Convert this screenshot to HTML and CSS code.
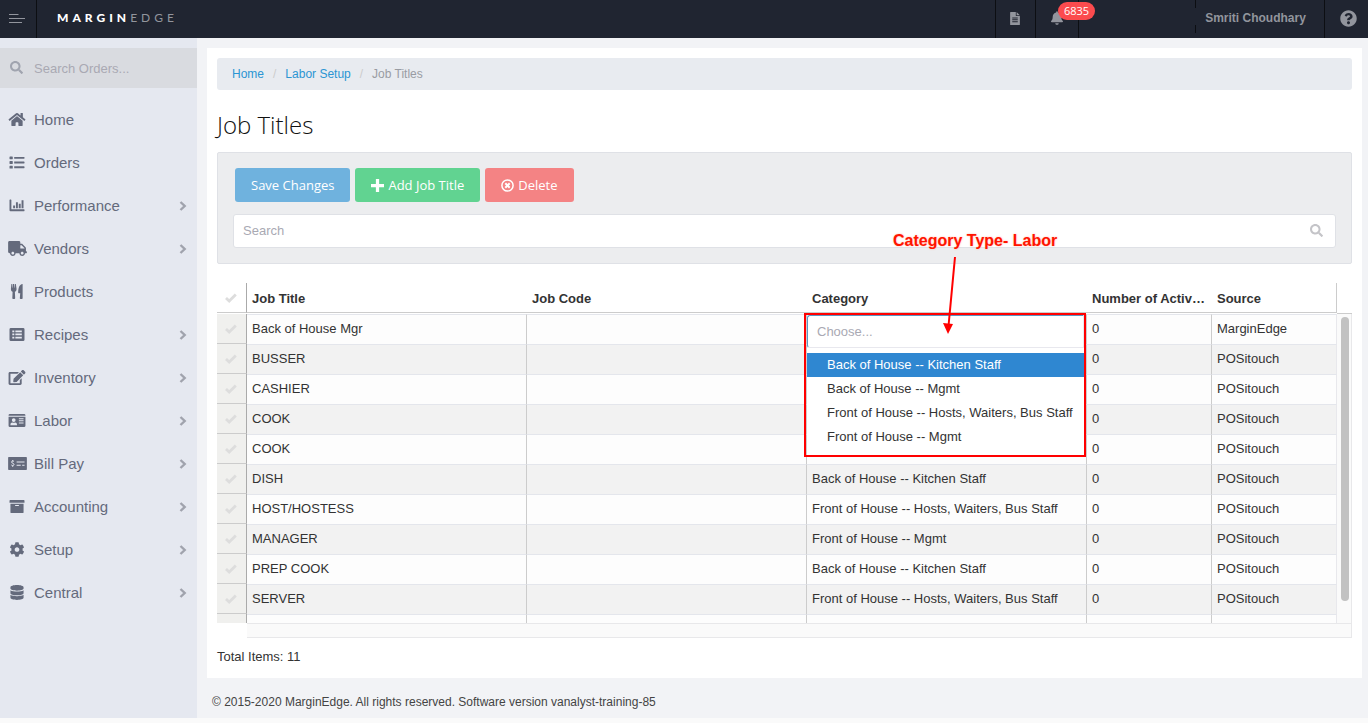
FILE: index.html
```html
<!DOCTYPE html>
<html lang="en">
<head>
  <meta charset="UTF-8">
  <meta name="viewport" content="width=device-width, initial-scale=1.0">
  <title>Job Titles - MarginEdge</title>
  <link rel="stylesheet" href="styles.css">
</head>
<body>

  <!-- Icon set -->
  <svg class="icon-set" aria-hidden="true">
    <symbol id="i-search" viewBox="0 0 512 512"><path d="M505 442.7L405.3 343c-4.5-4.5-10.6-7-17-7H372c27.6-35.3 44-79.7 44-128C416 93.1 322.9 0 208 0S0 93.1 0 208s93.1 208 208 208c48.3 0 92.7-16.4 128-44v16.3c0 6.4 2.5 12.5 7 17l99.7 99.7c9.4 9.4 24.6 9.4 33.9 0l28.3-28.3c9.4-9.4 9.4-24.6.1-34zM208 336c-70.7 0-128-57.2-128-128 0-70.7 57.2-128 128-128 70.7 0 128 57.2 128 128 0 70.7-57.2 128-128 128z"/></symbol>
    <symbol id="i-home" viewBox="0 0 576 512"><path d="M280.37 148.26L96 300.11V464a16 16 0 0 0 16 16l112.06-.29a16 16 0 0 0 15.92-16V368a16 16 0 0 1 16-16h64a16 16 0 0 1 16 16v95.64a16 16 0 0 0 16 16.05L464 480a16 16 0 0 0 16-16V300L295.67 148.26a12.19 12.19 0 0 0-15.3 0zM571.6 251.47L488 182.56V44.05a12 12 0 0 0-12-12h-56a12 12 0 0 0-12 12v72.61L318.47 43a48 48 0 0 0-61 0L4.34 251.47a12 12 0 0 0-1.6 16.9l25.5 31A12 12 0 0 0 45.15 301l235.22-193.74a12.19 12.19 0 0 1 15.3 0L530.9 301a12 12 0 0 0 16.9-1.6l25.5-31a12 12 0 0 0-1.7-16.93z"/></symbol>
    <symbol id="i-list" viewBox="0 0 512 512"><path d="M16 48h80a16 16 0 0 1 16 16v64a16 16 0 0 1-16 16H16a16 16 0 0 1-16-16V64a16 16 0 0 1 16-16zm0 160h80a16 16 0 0 1 16 16v64a16 16 0 0 1-16 16H16a16 16 0 0 1-16-16v-64a16 16 0 0 1 16-16zm0 160h80a16 16 0 0 1 16 16v64a16 16 0 0 1-16 16H16a16 16 0 0 1-16-16v-64a16 16 0 0 1 16-16zM160 64h336a16 16 0 0 1 16 16v32a16 16 0 0 1-16 16H160zm0 160h336a16 16 0 0 1 16 16v32a16 16 0 0 1-16 16H160zm0 160h336a16 16 0 0 1 16 16v32a16 16 0 0 1-16 16H160z"/></symbol>
    <symbol id="i-chart" viewBox="0 0 512 512"><path d="M16 48h32a16 16 0 0 1 16 16v320h432a16 16 0 0 1 16 16v32a16 16 0 0 1-16 16H32a32 32 0 0 1-32-32V64a16 16 0 0 1 16-16zM124 256h66v96h-66zM220 144h66v208h-66zM316 192h66v160h-66zM412 80h66v272h-66z"/></symbol>
    <symbol id="i-truck" viewBox="0 0 640 512"><path d="M624 352h-16V243.9c0-12.7-5.1-24.9-14.1-33.9L494 110.1c-9-9-21.2-14.1-33.9-14.1H416V48c0-26.5-21.5-48-48-48H48C21.5 0 0 21.5 0 48v320c0 26.5 21.5 48 48 48h16c0 53 43 96 96 96s96-43 96-96h128c0 53 43 96 96 96s96-43 96-96h48c8.8 0 16-7.2 16-16v-32c0-8.8-7.2-16-16-16zM160 464c-26.5 0-48-21.5-48-48s21.5-48 48-48 48 21.5 48 48-21.5 48-48 48zm320 0c-26.5 0-48-21.5-48-48s21.5-48 48-48 48 21.5 48 48-21.5 48-48 48zm80-208H416V144h44.1l99.9 99.9V256z"/></symbol>
    <symbol id="i-utensils" viewBox="0 0 416 512"><path d="M16 0h32l6 130h10L72 0h40l8 130h10L138 0h30l24 160c4 60-22 92-56 106l10 220c0 16-12 26-26 26H74c-14 0-26-10-26-26l10-220C24 250-4 220 0 160zM400 16v472c0 14-10 24-24 24h-48c-14 0-24-10-24-24l14-174h-52c-12 0-20-8-18-20C252 160 270 30 384 0c10 0 16 6 16 16z"/></symbol>
    <symbol id="i-recipes" viewBox="0 0 512 512"><path fill-rule="evenodd" d="M48 32h416a48 48 0 0 1 48 48v352a48 48 0 0 1-48 48H48a48 48 0 0 1-48-48V80a48 48 0 0 1 48-48zM96 116v60h68v-60zM200 116v60h220v-60zM96 224v60h68v-60zM200 224v60h220v-60zM96 332v60h68v-60zM200 332v60h220v-60z"/></symbol>
    <symbol id="i-edit" viewBox="0 0 576 512"><path d="M402.6 83.2l90.2 90.2c3.8 3.8 3.8 10 0 13.8L274.4 405.6l-92.8 10.3c-12.4 1.4-22.9-9.1-21.5-21.5l10.3-92.8L388.8 83.2c3.8-3.8 10-3.8 13.8 0zm162-22.9l-48.8-48.8c-15.2-15.2-39.9-15.2-55.2 0l-35.4 35.4c-3.8 3.8-3.8 10 0 13.8l90.2 90.2c3.8 3.8 10 3.8 13.8 0l35.4-35.4c15.2-15.3 15.2-40 0-55.2zM384 346.2V448H64V128h229.8c3.2 0 6.2-1.3 8.5-3.5l40-40c7.6-7.6 2.2-20.5-8.5-20.5H48C21.5 64 0 85.5 0 112v352c0 26.5 21.5 48 48 48h352c26.5 0 48-21.5 48-48V306.2c0-10.7-12.9-16-20.5-8.5l-40 40c-2.2 2.3-3.5 5.3-3.5 8.5z"/></symbol>
    <symbol id="i-idcard" viewBox="0 0 576 512"><path fill-rule="evenodd" d="M48 32h480a48 48 0 0 1 48 48v16H0V80a48 48 0 0 1 48-48zM0 128h576v304a48 48 0 0 1-48 48H48a48 48 0 0 1-48-48zM176 176a64 64 0 1 0 0 128a64 64 0 1 0 0-128zM64 400v16h224v-16c0-44-30-72-64-72-30 12-66 12-96 0-34 0-64 28-64 72zM352 176v36h160v-36zM352 248v36h160v-36zM352 320v36h160v-36z"/></symbol>
    <symbol id="i-check-pay" viewBox="0 0 640 512"><path d="M24 32h592a24 24 0 0 1 24 24v400a24 24 0 0 1-24 24H24a24 24 0 0 1-24-24V56a24 24 0 0 1 24-24z"/><path d="M200 190c-10-20-80-30-84 14-2 50 86 34 84 88-4 46-80 38-92 10M156 140v36M156 330v40" fill="none" stroke="#e5e8f0" stroke-width="34"/><path d="M290 190h270v34H290zM290 300h140v34H290zM480 300h80v34h-80z" fill="#e5e8f0"/></symbol>
    <symbol id="i-archive" viewBox="0 0 512 512"><path fill-rule="evenodd" d="M24 32h464a24 24 0 0 1 24 24v72H0V56a24 24 0 0 1 24-24zM32 160h448v288a32 32 0 0 1-32 32H64a32 32 0 0 1-32-32zM192 204v36h128v-36z"/></symbol>
    <symbol id="i-cog" viewBox="0 0 512 512"><path d="M487.4 315.7l-42.6-24.6c4.3-23.2 4.3-47 0-70.2l42.6-24.6c4.9-2.8 7.1-8.6 5.5-14-11.1-35.6-30-67.8-54.7-94.6-3.8-4.1-10-5.1-14.8-2.3L380.8 110c-17.9-15.4-38.5-27.3-60.8-35.1V25.8c0-5.6-3.9-10.5-9.4-11.7-36.7-8.2-74.3-7.8-109.2 0-5.5 1.2-9.4 6.1-9.4 11.7V75c-22.2 7.9-42.8 19.8-60.8 35.1L88.7 85.5c-4.9-2.8-11-1.9-14.8 2.3-24.7 26.7-43.6 58.9-54.7 94.6-1.7 5.4.6 11.2 5.5 14L67.3 221c-4.3 23.2-4.3 47 0 70.2l-42.6 24.6c-4.9 2.8-7.1 8.6-5.5 14 11.1 35.6 30 67.8 54.7 94.6 3.8 4.1 10 5.1 14.8 2.3l42.6-24.6c17.9 15.4 38.5 27.3 60.8 35.1v49.2c0 5.6 3.9 10.5 9.4 11.7 36.7 8.2 74.3 7.8 109.2 0 5.5-1.2 9.4-6.1 9.4-11.7v-49.2c22.2-7.9 42.8-19.8 60.8-35.1l42.6 24.6c4.9 2.8 11 1.9 14.8-2.3 24.7-26.7 43.6-58.9 54.7-94.6 1.5-5.5-.7-11.3-5.6-14.1zM256 336c-44.1 0-80-35.9-80-80s35.9-80 80-80 80 35.9 80 80-35.9 80-80 80z"/></symbol>
    <symbol id="i-database" viewBox="0 0 448 512"><path d="M448 73.143v45.714C448 159.143 347.667 192 224 192S0 159.143 0 118.857V73.143C0 32.857 100.333 0 224 0s224 32.857 224 73.143zM448 176v102.857C448 319.143 347.667 352 224 352S0 319.143 0 278.857V176c48.125 33.143 136.208 48.572 224 48.572S399.874 209.143 448 176zm0 160v102.857C448 479.143 347.667 512 224 512S0 479.143 0 438.857V336c48.125 33.143 136.208 48.572 224 48.572S399.874 369.143 448 336z"/></symbol>
    <symbol id="i-chevron" viewBox="0 0 8 10"><path d="M1.500 1l4.200 4-4.200 4" fill="none" stroke="currentColor" stroke-width="2.400"/></symbol>
    <symbol id="i-file" viewBox="0 0 384 512"><path fill-rule="evenodd" d="M24 0h200v136a24 24 0 0 0 24 24h136v328a24 24 0 0 1-24 24H24a24 24 0 0 1-24-24V24A24 24 0 0 1 24 0zM256 0l128 128H256zM84 216v40h216v-40zM84 288v40h216v-40zM84 360v40h216v-40z"/></symbol>
    <symbol id="i-bell" viewBox="0 0 448 512"><path d="M224 512c35.32 0 63.97-28.65 63.97-64H160.03c0 35.35 28.65 64 63.97 64zm215.39-149.71c-19.32-20.76-55.47-51.99-55.47-154.29 0-77.7-54.48-139.9-127.94-155.16V32c0-17.67-14.32-32-31.98-32s-31.98 14.33-31.98 32v20.84C118.56 68.1 64.08 130.3 64.08 208c0 102.3-36.15 133.53-55.47 154.29-6 6.45-8.66 14.16-8.61 21.71.11 16.4 12.98 32 32.1 32h383.8c19.12 0 32-15.6 32.1-32 .05-7.55-2.61-15.27-8.61-21.71z"/></symbol>
    <symbol id="i-question" viewBox="0 0 512 512"><path d="M504 256c0 136.997-111.043 248-248 248S8 392.997 8 256C8 119.083 119.043 8 256 8s248 111.083 248 248zM262.655 90c-54.497 0-89.255 22.957-116.549 63.758-3.536 5.286-2.353 12.415 2.715 16.258l34.699 26.31c5.205 3.947 12.621 3.008 16.665-2.122 17.864-22.658 30.113-35.797 57.303-35.797 20.429 0 45.698 13.148 45.698 32.958 0 14.976-12.363 22.667-32.534 33.976C247.128 238.528 216 254.941 216 296v4c0 6.627 5.373 12 12 12h56c6.627 0 12-5.373 12-12v-1.333c0-28.462 83.186-29.647 83.186-106.667 0-58.002-60.165-102-116.531-102zM256 338c-25.365 0-46 20.635-46 46 0 25.364 20.635 46 46 46s46-20.636 46-46c0-25.365-20.635-46-46-46z"/></symbol>
    <symbol id="i-plus" viewBox="0 0 12 12"><path d="M4.5 0h3v4.5H12v3H7.5V12h-3V7.500H0v-3h4.500z"/></symbol>
    <symbol id="i-remove" viewBox="0 0 13 13"><circle cx="6.500" cy="6.500" r="5.600" fill="none" stroke="currentColor" stroke-width="1.500"/><path d="M4.300 4.300l4.400 4.400M8.700 4.300L4.300 8.700" stroke="currentColor" stroke-width="2"/></symbol>
    <symbol id="i-ok" viewBox="0 0 12 10"><path d="M1 5l3.200 3L10.800 1.500" fill="none" stroke="currentColor" stroke-width="2.800"/></symbol>
  </svg>

  <header class="topbar">
    <button class="menu-toggle" aria-label="Menu">
      <svg width="16" height="10" viewBox="0 0 16 10"><path d="M0 .5h9.500M0 4.500h16M0 8.500h13" stroke="currentColor"/></svg>
    </button>
    <a class="logo" href="#"><b>MARGIN</b>EDGE</a>
    <a class="top-item top-file" href="#" aria-label="Documents"><svg class="icon-file"><use href="#i-file"/></svg></a>
    <a class="top-item top-bell" href="#" aria-label="Notifications"><svg class="icon-bell"><use href="#i-bell"/></svg><span class="badge">6835</span></a>
    <div class="top-item top-tenant"></div>
    <a class="top-item top-user" href="#">Smriti Choudhary</a>
    <a class="top-item top-help" href="#" aria-label="Help"><svg class="icon-help"><use href="#i-question"/></svg></a>
  </header>

  <div class="layout">
    <aside class="sidebar">
      <label class="side-search">
        <svg><use href="#i-search"/></svg>
        <input type="text" placeholder="Search Orders..." aria-label="Search Orders">
      </label>
      <nav class="side-nav">
        <a href="#"><svg class="nav-icon"><use href="#i-home"/></svg><span>Home</span></a>
        <a href="#"><svg class="nav-icon"><use href="#i-list"/></svg><span>Orders</span></a>
        <a href="#"><svg class="nav-icon"><use href="#i-chart"/></svg><span>Performance</span><svg class="chevron"><use href="#i-chevron"/></svg></a>
        <a href="#"><svg class="nav-icon wide"><use href="#i-truck"/></svg><span>Vendors</span><svg class="chevron"><use href="#i-chevron"/></svg></a>
        <a href="#"><svg class="nav-icon"><use href="#i-utensils"/></svg><span>Products</span></a>
        <a href="#"><svg class="nav-icon"><use href="#i-recipes"/></svg><span>Recipes</span><svg class="chevron"><use href="#i-chevron"/></svg></a>
        <a href="#"><svg class="nav-icon"><use href="#i-edit"/></svg><span>Inventory</span><svg class="chevron"><use href="#i-chevron"/></svg></a>
        <a href="#"><svg class="nav-icon"><use href="#i-idcard"/></svg><span>Labor</span><svg class="chevron"><use href="#i-chevron"/></svg></a>
        <a href="#"><svg class="nav-icon wide"><use href="#i-check-pay"/></svg><span>Bill Pay</span><svg class="chevron"><use href="#i-chevron"/></svg></a>
        <a href="#"><svg class="nav-icon"><use href="#i-archive"/></svg><span>Accounting</span><svg class="chevron"><use href="#i-chevron"/></svg></a>
        <a href="#"><svg class="nav-icon"><use href="#i-cog"/></svg><span>Setup</span><svg class="chevron"><use href="#i-chevron"/></svg></a>
        <a href="#"><svg class="nav-icon"><use href="#i-database"/></svg><span>Central</span><svg class="chevron"><use href="#i-chevron"/></svg></a>
      </nav>
    </aside>

    <div class="content">
      <main class="card">
        <nav class="breadcrumb">
          <a href="#">Home</a><i>/</i><a href="#">Labor Setup</a><i>/</i><span>Job Titles</span>
        </nav>

        <h1>Job Titles</h1>

        <div class="panel">
          <div class="buttons">
            <button class="button save">Save Changes</button>
            <button class="button add"><svg><use href="#i-plus"/></svg>Add Job Title</button>
            <button class="button delete"><svg><use href="#i-remove"/></svg>Delete</button>
          </div>
          <label class="search-box">
            <input type="text" placeholder="Search" aria-label="Search">
            <svg><use href="#i-search"/></svg>
          </label>
        </div>

        <div class="grid">
          <div class="grid-main">
            <div class="grid-viewport">
              <table>
                <colgroup>
                  <col class="col-check"><col class="col-wide"><col class="col-wide"><col class="col-wide"><col class="col-count"><col>
                </colgroup>
                <thead>
                  <tr>
                    <th class="check"><label><input type="checkbox" aria-label="Select all"><svg><use href="#i-ok"/></svg></label></th>
                    <th>Job Title</th><th>Job Code</th><th>Category</th><th>Number of Active Employees</th><th>Source</th>
                  </tr>
                </thead>
                <tbody>
                  <tr>
                    <td class="check"><label><input type="checkbox" aria-label="Select row"><svg><use href="#i-ok"/></svg></label></td>
                    <td>Back of House Mgr</td><td></td>
                    <td class="editing">
                      <div class="chooser">
                        <input type="text" placeholder="Choose..." aria-label="Category">
                        <ul role="listbox">
                          <li class="active" role="option">Back of House -- Kitchen Staff</li>
                          <li role="option">Back of House -- Mgmt</li>
                          <li role="option">Front of House -- Hosts, Waiters, Bus Staff</li>
                          <li role="option">Front of House -- Mgmt</li>
                        </ul>
                      </div>
                    </td>
                    <td>0</td><td>MarginEdge</td>
                  </tr>
                  <tr><td class="check"><label><input type="checkbox" aria-label="Select row"><svg><use href="#i-ok"/></svg></label></td><td>BUSSER</td><td></td><td></td><td>0</td><td>POSitouch</td></tr>
                  <tr><td class="check"><label><input type="checkbox" aria-label="Select row"><svg><use href="#i-ok"/></svg></label></td><td>CASHIER</td><td></td><td></td><td>0</td><td>POSitouch</td></tr>
                  <tr><td class="check"><label><input type="checkbox" aria-label="Select row"><svg><use href="#i-ok"/></svg></label></td><td>COOK</td><td></td><td></td><td>0</td><td>POSitouch</td></tr>
                  <tr><td class="check"><label><input type="checkbox" aria-label="Select row"><svg><use href="#i-ok"/></svg></label></td><td>COOK</td><td></td><td></td><td>0</td><td>POSitouch</td></tr>
                  <tr><td class="check"><label><input type="checkbox" aria-label="Select row"><svg><use href="#i-ok"/></svg></label></td><td>DISH</td><td></td><td>Back of House -- Kitchen Staff</td><td>0</td><td>POSitouch</td></tr>
                  <tr><td class="check"><label><input type="checkbox" aria-label="Select row"><svg><use href="#i-ok"/></svg></label></td><td>HOST/HOSTESS</td><td></td><td>Front of House -- Hosts, Waiters, Bus Staff</td><td>0</td><td>POSitouch</td></tr>
                  <tr><td class="check"><label><input type="checkbox" aria-label="Select row"><svg><use href="#i-ok"/></svg></label></td><td>MANAGER</td><td></td><td>Front of House -- Mgmt</td><td>0</td><td>POSitouch</td></tr>
                  <tr><td class="check"><label><input type="checkbox" aria-label="Select row"><svg><use href="#i-ok"/></svg></label></td><td>PREP COOK</td><td></td><td>Back of House -- Kitchen Staff</td><td>0</td><td>POSitouch</td></tr>
                  <tr><td class="check"><label><input type="checkbox" aria-label="Select row"><svg><use href="#i-ok"/></svg></label></td><td>SERVER</td><td></td><td>Front of House -- Hosts, Waiters, Bus Staff</td><td>0</td><td>POSitouch</td></tr>
                  <tr><td class="check"></td><td></td><td></td><td></td><td></td><td></td></tr>
                </tbody>
              </table>
            </div>

            <!-- Callout for the category editor -->
            <div class="callout">
              <div class="callout-text">Category Type- Labor</div>
              <svg class="callout-arrow" width="16" height="80" viewBox="0 0 16 80"><path d="M12 1L5.500 70" stroke="#f00" stroke-width="2"/><path d="M0 67l10 1-5 10z" fill="#f00"/></svg>
            </div>
          </div>
          <div class="grid-scroll"><div class="thumb"></div></div>
        </div>
        <div class="grid-foot"></div>
        <div class="total">Total Items: 11</div>
      </main>
      <footer class="footer">© 2015-2020 MarginEdge. All rights reserved. Software version vanalyst-training-85</footer>
    </div>
  </div>

</body>
</html>
```

FILE: styles.css
```css
* {
  box-sizing: border-box;
}

body {
  margin: 0;
  min-height: 100vh;
  background: #fafafa;
  color: #333;
  font-family: "Liberation Sans", Arial, sans-serif;
  font-size: 13px;
  line-height: 18px;
}

a {
  color: inherit;
  text-decoration: none;
}

svg {
  fill: currentColor;
  flex: none;
}

input {
  font: inherit;
  color: inherit;
}

input::placeholder {
  color: #a9a9b3;
  opacity: 1;
}

.icon-set {
  display: none;
}

/* Top bar */
.topbar {
  display: flex;
  height: 38px;
  background: #202531;
  color: #92959d;
}

.menu-toggle {
  width: 37px;
  padding: 0 0 0 9px;
  border: none;
  border-right: 1px solid #0c0e12;
  background: none;
  color: #92959d;
  text-align: left;
}

.logo {
  flex: 1;
  padding-left: 20px;
  font-family: Lato, sans-serif;
  font-size: 12px;
  line-height: 36px;
  letter-spacing: 4px;
}

.logo b {
  color: #fff;
  font-weight: 900;
}

.top-item {
  display: flex;
  align-items: center;
  justify-content: center;
  border-left: 1px solid #0c0e12;
}

.top-file {
  width: 40px;
  padding: 0 2px 2px 0;
}

.top-bell {
  position: relative;
  width: 43px;
  padding-bottom: 2px;
}

.top-tenant {
  width: 117px;
}

.top-user {
  width: 129px;
  padding: 0 8px 2px 0;
  border-left: none;
  background: linear-gradient(#0c0e12 0 8px, transparent 8px 25px, #0c0e12 25px 33px, transparent 33px) no-repeat 0 0 / 1px 33px;
  font-size: 12px;
  font-weight: bold;
}

.top-help {
  width: 44px;
  padding: 0 0 2px 4px;
}

.icon-file {
  width: 10px;
  height: 13px;
}

.icon-bell {
  width: 12px;
  height: 14px;
}

.icon-help {
  width: 17px;
  height: 17px;
}

.badge {
  position: absolute;
  top: 2px;
  left: 22px;
  padding: 0 6px;
  border-radius: 9px;
  background: #fb4b4e;
  color: #fff;
  font-family: "Open Sans", sans-serif;
  font-size: 11px;
  line-height: 18px;
}

/* Sidebar */
.layout {
  display: flex;
}

.sidebar {
  flex: none;
  width: 197px;
  padding-top: 10px;
  background: #e5e8f0;
  color: #646a7c;
}

.side-search {
  display: flex;
  align-items: center;
  gap: 11px;
  height: 40px;
  padding-left: 10px;
  background: #d9dbe0;
  color: #a0a4af;
}

.side-search svg {
  width: 13px;
  height: 13px;
  margin-bottom: 2px;
}

.side-search input {
  width: 150px;
  padding: 2px 0 0;
  border: none;
  background: none;
}

.side-nav {
  padding-top: 10px;
}

.side-nav a {
  display: flex;
  align-items: center;
  gap: 8px;
  height: 43px;
  padding: 0 10px 0 8px;
  font-size: 15px;
}

.side-nav span {
  flex: 1;
}

.nav-icon {
  width: 18px;
  height: 15px;
}

.nav-icon.wide {
  width: 19px;
  margin-right: -1px;
}

.chevron {
  width: 8px;
  height: 10px;
  color: #a0a3ad;
}

/* Content */
.content {
  flex: 1;
  min-width: 0;
  background: #f2f3f6;
}

.card {
  margin: 10px 6px 0 10px;
  padding: 10px;
  background: #fff;
}

.breadcrumb {
  height: 32px;
  padding-left: 15px;
  border-radius: 3px;
  background: #e8ebf0;
  color: #999ca3;
  font-size: 12px;
  line-height: 32px;
}

.breadcrumb a {
  color: #2b95d3;
}

.breadcrumb i {
  padding: 0 9px;
  color: #ccc;
  font-style: normal;
}

h1 {
  margin: 18px 0 11px;
  color: #111;
  font-family: "Open Sans", sans-serif;
  font-size: 24px;
  font-weight: 300;
  line-height: 33px;
}

.panel {
  padding: 15px;
  border: 1px solid #dfe1e6;
  border-radius: 2px;
  background: #ecedef;
}

.buttons {
  display: flex;
  gap: 5px;
  margin-bottom: 12px;
  padding-left: 2px;
}

.button {
  display: flex;
  align-items: center;
  gap: 4px;
  height: 34px;
  padding: 0 16px;
  border: none;
  border-radius: 3px;
  color: #fff;
  font-family: "Open Sans", sans-serif;
  font-size: 13px;
  cursor: pointer;
}

.button svg {
  width: 13px;
  height: 13px;
}

.save {
  background: #6fb2de;
}

.add {
  background: #61d391;
}

.delete {
  background: #f48384;
}

.search-box {
  display: flex;
  align-items: center;
  height: 34px;
  padding: 0 12px 0 9px;
  border: 1px solid #dfe1e6;
  border-radius: 3px;
  background: #fff;
  color: #c4c4c8;
}

.search-box input {
  flex: 1;
  padding: 0;
  border: none;
  background: none;
}

.search-box svg {
  width: 13px;
  height: 13px;
  margin-bottom: 2px;
}

/* Grid */
.grid {
  display: flex;
  margin-top: 19px;
}

.grid-main {
  flex: 1;
  position: relative;
  min-width: 0;
}

.grid-viewport {
  height: 340px;
  overflow: hidden;
}

table {
  width: 100%;
  table-layout: fixed;
  border-spacing: 0;
}

.col-check {
  width: 30px;
}

.col-wide {
  width: 25%;
}

.col-count {
  width: 125px;
}

th,
td {
  height: 30px;
  padding: 0 5px 2px;
  overflow: hidden;
  text-align: left;
  text-overflow: ellipsis;
  white-space: nowrap;
}

th {
  padding: 2px 5px 0;
  border-bottom: 1px solid #ccc;
  color: #333;
}

th:last-child {
  border-right: 1px solid #ccc;
}

/* thin gap under the header line */
tbody::before {
  content: "";
  display: block;
  height: 1px;
}

td {
  border-top: 1px solid #e4e6ec;
  border-right: 1px solid #ccc;
  background: #fdfdfd;
}

tr:nth-child(even) td {
  background: #f2f2f2;
}

td:last-child {
  border-right-color: #e8e8ec;
}

.check,
tr:nth-child(even) .check {
  padding: 0 2px 0 0;
  border-right: 1px solid #aaa;
}

td.check,
tr:nth-child(even) td.check {
  border-top: none;
  border-bottom: 1px solid #ccc;
  background: #f0f0ee;
}

.check label {
  display: flex;
  justify-content: center;
}

.check input {
  position: absolute;
  opacity: 0;
}

.check svg {
  width: 12px;
  height: 10px;
  color: #ddd;
}

.check input:checked + svg {
  color: #2f87d1;
}

/* Category editor */
.editing {
  position: relative;
  overflow: visible;
}

.chooser {
  position: absolute;
  z-index: 1;
  top: 0;
  left: 0;
  right: 2px;
}

.chooser input {
  display: block;
  width: 100%;
  height: 33px;
  padding: 0 9px;
  border: 1px solid #e8e8ee;
  border-top-color: #5897c4;
  border-left-color: #5897c4;
  border-radius: 3px 0 0 3px;
  background: #fff;
}

.chooser ul {
  margin: 0;
  padding: 5px 0 6px;
  background: #fff;
  list-style: none;
}

.chooser li {
  padding: 3px 0 3px 20px;
}

.chooser .active {
  background: #2f87d1;
  color: #fff;
}

.callout {
  position: absolute;
  z-index: 2;
  top: 30px;
  left: calc(50% + 27px);
  width: calc(25% + 2px);
  height: 144px;
  border: 2px solid #f00;
  pointer-events: none;
}

.callout-text {
  position: absolute;
  top: -83px;
  left: 87px;
  color: #ff1400;
  font-size: 16px;
  font-weight: bold;
  text-shadow: 0 0 2px #ffb4a8;
  white-space: nowrap;
}

.callout-arrow {
  position: absolute;
  top: -59px;
  left: 137px;
}

.grid-scroll {
  width: 15px;
  border-right: 1px solid #e8e8ea;
  background: #fafafa;
}

.grid-scroll::before {
  content: "";
  display: block;
  height: 30px;
  margin-right: -1px;
  border-bottom: 1px solid #ccc;
  background: #fff;
}

.thumb {
  width: 8px;
  height: 284px;
  margin: 3px 0 0 4px;
  border-radius: 4px;
  background: #c2c2c2;
}

.grid-foot {
  height: 15px;
  margin-left: 30px;
  border: solid #e8e8ea;
  border-width: 1px 1px 1px 0;
  background: #fafafa;
}

.total {
  padding: 10px 0 2px;
}

.footer {
  padding: 15px 5px 7px;
  color: #444;
  font-size: 12px;
}

.footer {
  padding-left: 15px;
}
```
